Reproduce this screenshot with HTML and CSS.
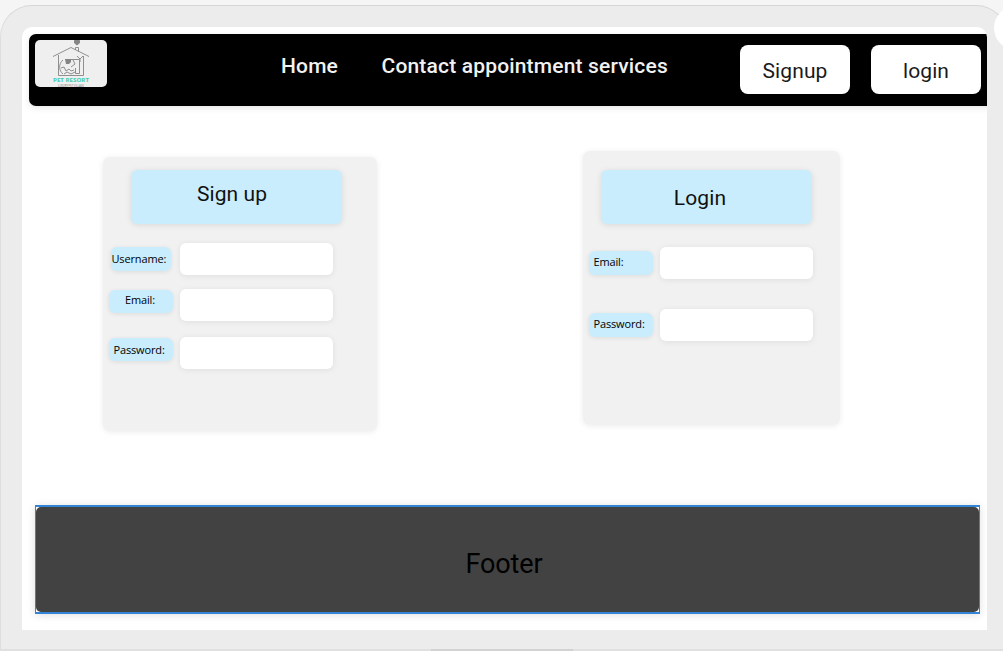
FILE: index.html
```html
<!DOCTYPE html>
<html lang="en">
<head>
<meta charset="utf-8">
<title>Pet Resort</title>
<link rel="stylesheet" href="styles.css">
</head>
<body>
<div class="device">
  <div class="screen">
    <header class="navbar">
      <div class="logo">
        <svg width="72" height="47" viewBox="0 0 72 47">
          <g fill="none" stroke="#8f8f8f" stroke-width="1">
            <path d="M18 16.5L36 7.5L54 16.5"/>
            <path d="M23.500 15V35.500H48.500V16"/>
            <path d="M40.500 10V7.500H43.500V12"/>
            <path d="M30 19.500H44.500V33.500H40.500V28"/>
            <path d="M28 20C23 24 24 31 28 34M26 28L29 27L31 31L34 29L36 31L39 30M29 34L32 32L36 34L40 32M38 20L40 24L36 27M42 16L45 19L48 16M45 19V22"/>
          </g>
          <path d="M30 19H36V22L34 24H31Z" fill="#858585"/>
          <path d="M39.500 .5H44.500V3L42 5L39.500 3Z" fill="#858585" stroke="#858585"/>
          <text class="logo-name" x="18" y="42" textLength="36" lengthAdjust="spacingAndGlyphs">PET RESORT</text>
          <text class="logo-tag" x="23" y="47" textLength="26" lengthAdjust="spacingAndGlyphs">LUXURY PET VILLAGE</text>
        </svg>
      </div>
      <nav class="links">
        <a class="link">Home</a>
        <a class="link link-wide">Contact appointment services</a>
      </nav>
      <div class="actions">
        <button class="action">Signup</button>
        <button class="action">login</button>
      </div>
    </header>
    <main class="forms">
      <form class="card card-signup">
        <h2 class="title title-signup">Sign up</h2>
        <div class="row row-username"><label class="label label-username" for="su-name">Username:</label><input class="field" id="su-name"></div>
        <div class="row row-email"><label class="label label-email" for="su-email">Email:</label><input class="field" id="su-email"></div>
        <div class="row"><label class="label label-password" for="su-pass">Password:</label><input class="field" id="su-pass"></div>
      </form>
      <form class="card card-login">
        <h2 class="title title-login">Login</h2>
        <div class="row row-login"><label class="label label-login" for="li-email">Email:</label><input class="field" id="li-email"></div>
        <div class="row row-login"><label class="label label-login" for="li-pass">Password:</label><input class="field" id="li-pass"></div>
      </form>
    </main>
    <footer class="footer"><div class="footer-box">Footer</div></footer>
  </div>
  <div class="side-tab"></div>
  <div class="home-bar"></div>
</div>
</body>
</html>
```
FILE: styles.css
```css
* { box-sizing: border-box; }
body { margin: 0; height: 651px; padding-top: 5px; overflow: hidden; background: #f5f5f5; font-family: Roboto, sans-serif; color: #111; }
.device { position: relative; width: 1008px; height: 646px; padding: 21px 20px 19px 21px; border: 1px solid #d6d6d6; border-left-color: #dedede; border-bottom: 2px solid #e0e0e0; border-radius: 32px 32px 0 0; background: #ececec; }
.screen { width: 965px; height: 603px; padding: 7px 0 0 7px; border-radius: 10px 10px 0 0; background: #fff; overflow: hidden; }
.navbar { display: flex; width: 965px; height: 72px; padding: 6px; border-radius: 7px; background: #000; box-shadow: 0 2px 6px rgba(0,0,0,.1); }
.logo { width: 72px; height: 47px; border-radius: 5px; background: #efefef; overflow: hidden; }
.logo svg { display: block; }
.logo-name { font: 700 6px "Open Sans", sans-serif; fill: #3fcbb0; }
.logo-tag { font: 4px "Open Sans", sans-serif; fill: #707070; }
.links { display: flex; width: 390px; margin-left: 174px; padding-top: 12px; gap: 43.5px; color: #f1f1f1; font-size: 21px; line-height: 28px; font-weight: 500; letter-spacing: .17px; white-space: nowrap; }
.actions { display: flex; gap: 21px; margin: 5px 0 0 69px; }
.action { flex: none; width: 110px; height: 49px; padding: 2px 0 0; border: 0; border-radius: 8px; background: #fff; color: #1a1a1a; font: 21px Roboto, sans-serif; letter-spacing: .1px; }
.forms { display: flex; align-items: flex-start; height: 399px; padding: 44.5px 0 0 73.5px; gap: 206px; }
.card { height: 274px; border-radius: 7px; background: #f1f1f1; box-shadow: 0 1px 6px rgba(0,0,0,.08); }
.card-signup { width: 274px; margin-top: 6.5px; padding: 13px 0 0 6.5px; }
.card-login { width: 257px; padding: 19.5px 0 0 6.5px; }
.title { display: flex; justify-content: center; width: 211px; height: 54px; margin: 0; border-radius: 6px; background: #c9edfd; box-shadow: 0 1px 6px rgba(0,0,0,.1); font-size: 21px; line-height: 24px; font-weight: 400; letter-spacing: .1px; }
.title-signup { margin: 0 0 19px 22px; padding: 12px 9px 0 0; }
.title-login { margin: 0 0 23px 12px; padding: 16px 13px 0 0; }
.row { display: grid; grid-template-columns: 64px 153px; column-gap: 7px; height: 32px; align-items: start; }
.row-username { margin-bottom: 14px; }
.row-email { margin-bottom: 16px; }
.row-login { margin-bottom: 30px; }
.label { height: 23.5px; padding-left: 4.5px; border-radius: 6px; background: #c9edfd; box-shadow: 0 1px 5px rgba(0,0,0,.09); color: #000; font: 11px/24px "Open Sans", sans-serif; letter-spacing: -.15px; white-space: nowrap; }
.label-username { width: 60.5px; margin: 4px 0 0 1.5px; padding-left: 1px; }
.label-email { margin-top: .5px; padding-left: 16px; line-height: 19px; }
.label-password { margin-top: .5px; line-height: 23px; }
.label-login { margin-top: 4px; line-height: 22px; }
.field { width: 153px; height: 32px; padding: 0 8px; border: 0; border-radius: 6px; background: #fff; box-shadow: 0 1px 6px rgba(0,0,0,.08); }
.footer { width: 945px; height: 109px; margin-left: 6px; border: solid #3484d6; border-width: 2px 1px; background: #fff; box-shadow: 0 1px 8px rgba(0,0,0,.13); }
.footer-box { display: flex; justify-content: center; height: 105px; padding: 40px 7px 0 0; border-radius: 5px; background: #424242; color: #000; font-size: 27px; line-height: 34px; letter-spacing: -.1px; }
.side-tab { position: absolute; top: 0; left: 993px; width: 44px; height: 44px; border-radius: 22px; background: #fff; }
.home-bar { position: absolute; left: 430px; bottom: -2px; width: 142px; height: 2px; background: #d2d2d2; }
```
